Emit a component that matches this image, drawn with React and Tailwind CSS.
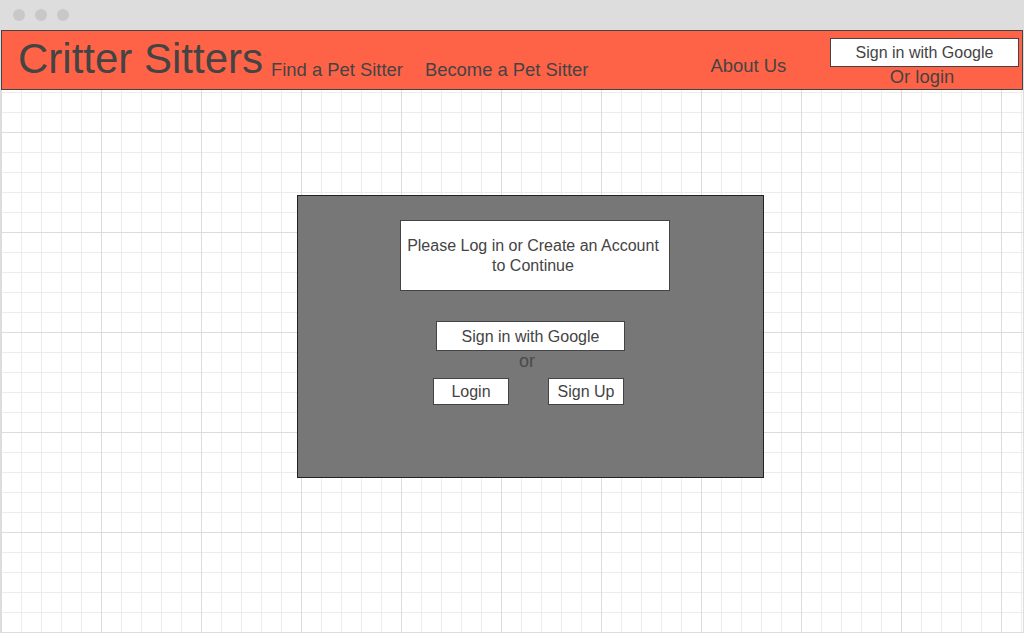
import React from "react";

const gridBg =
  "bg-[linear-gradient(to_right,#dcdcdc_1px,transparent_1px),linear-gradient(to_bottom,#dcdcdc_1px,transparent_1px),linear-gradient(to_right,#ececec_1px,transparent_1px),linear-gradient(to_bottom,#ececec_1px,transparent_1px)] bg-[size:100px_100px,100px_100px,20px_20px,20px_20px] bg-[position:0_2px]";

function TitleBar() {
  return (
    <div className="flex h-[30px] items-center gap-[10px] bg-[#dddddd] pl-[13px]">
      <span className="h-[12px] w-[12px] rounded-full bg-[#c8c8c8]" />
      <span className="h-[12px] w-[12px] rounded-full bg-[#c8c8c8]" />
      <span className="h-[12px] w-[12px] rounded-full bg-[#c8c8c8]" />
    </div>
  );
}

function NavBar() {
  return (
    <header className="flex h-[60px] border border-[#444444] bg-[#ff6347] text-[#444444]">
      <h1 className="ml-[16px] mt-[4px] text-[42px] leading-[48px]">Critter Sitters</h1>
      <a className="ml-[8px] mt-[28px] text-[18.4px] leading-[22px]">Find a Pet Sitter</a>
      <a className="ml-[22px] mt-[28px] text-[18.4px] leading-[22px]">Become a Pet Sitter</a>
      <a className="ml-[122px] mt-[24px] text-[18.4px] leading-[22px]">About Us</a>
      <div className="ml-auto mr-[3px] mt-[7px] flex flex-col items-center">
        <button className="h-[29px] w-[189px] border border-[#444444] bg-white text-[16px] leading-[26px] text-[#444444]">
          Sign in with Google
        </button>
        <span className="mr-[5px] mt-[1px] text-[18.4px] leading-[18px]">Or login</span>
      </div>
    </header>
  );
}

function LoginPanel() {
  return (
    <section className="ml-[296px] mt-[105px] h-[283px] w-[467px] border border-[#222222] bg-[#777777] text-[#444444]">
      <div className="ml-[102px] mt-[24px] flex h-[71px] w-[270px] items-center justify-center whitespace-nowrap border border-[#444444] bg-white pr-[4px] text-center text-[16px] leading-[20px]">
        <p>
          Please Log in or Create an Account
          <br />
          to Continue
        </p>
      </div>
      <button className="ml-[138px] mt-[30px] block h-[30px] w-[189px] border border-[#444444] bg-white text-[16px] leading-[27px]">
        Sign in with Google
      </button>
      <p className="ml-[138px] w-[182px] text-center text-[18px] leading-[20px] text-[#4a4a4a]">or</p>
      <div className="ml-[135px] mt-[7px] flex gap-[39px]">
        <button className="h-[27px] w-[76px] border border-[#444444] bg-white text-[16px] leading-[25px]">
          Login
        </button>
        <button className="h-[27px] w-[76px] border border-[#444444] bg-white text-[16px] leading-[25px]">
          Sign Up
        </button>
      </div>
    </section>
  );
}

export default function App() {
  return (
    <div className="h-[633px] w-[1024px] overflow-hidden bg-white font-['Liberation_Sans',Arial,sans-serif]">
      <TitleBar />
      <div className={`h-[603px] border-x border-[#dddddd] ${gridBg}`}>
        <NavBar />
        <LoginPanel />
      </div>
    </div>
  );
}
